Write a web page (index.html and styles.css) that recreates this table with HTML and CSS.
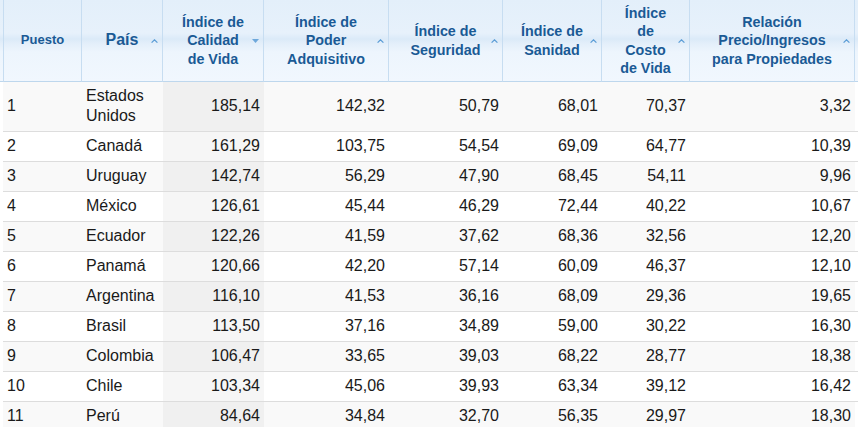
FILE: index.html
```html
<!DOCTYPE html>
<html lang="es">
<head>
<meta charset="utf-8">
<title>Ranking</title>
<link rel="stylesheet" href="styles.css">
</head>
<body>
<table class="rank">
  <colgroup>
    <col class="c-pad">
    <col class="c-rank">
    <col class="c-country">
    <col class="c-qol">
    <col class="c-power">
    <col class="c-safety">
    <col class="c-health">
    <col class="c-cost">
    <col class="c-price">
    <col class="c-pad">
  </colgroup>
  <thead>
    <tr>
      <th class="pad"></th>
      <th class="first">Puesto</th>
      <th class="big">País<span class="sort"><svg width="7" height="4" viewBox="0 0 7 4"><path d="M0.6 3.6 L3.5 0.8 L6.4 3.6" fill="none" stroke="#5b9dd6" stroke-width="1.2"/></svg></span></th>
      <th>Índice de<br>Calidad<br>de Vida<span class="sort"><svg width="7" height="4" viewBox="0 0 7 4"><path d="M0 0 H7 L3.5 4 Z" fill="#6ea8db"/></svg></span></th>
      <th>Índice de<br>Poder<br>Adquisitivo<span class="sort"><svg width="7" height="4" viewBox="0 0 7 4"><path d="M0.6 3.6 L3.5 0.8 L6.4 3.6" fill="none" stroke="#5b9dd6" stroke-width="1.2"/></svg></span></th>
      <th>Índice de<br>Seguridad<span class="sort"><svg width="7" height="4" viewBox="0 0 7 4"><path d="M0.6 3.6 L3.5 0.8 L6.4 3.6" fill="none" stroke="#5b9dd6" stroke-width="1.2"/></svg></span></th>
      <th>Índice de<br>Sanidad<span class="sort"><svg width="7" height="4" viewBox="0 0 7 4"><path d="M0.6 3.6 L3.5 0.8 L6.4 3.6" fill="none" stroke="#5b9dd6" stroke-width="1.2"/></svg></span></th>
      <th>Índice<br>de<br>Costo<br>de Vida<span class="sort"><svg width="7" height="4" viewBox="0 0 7 4"><path d="M0.6 3.6 L3.5 0.8 L6.4 3.6" fill="none" stroke="#5b9dd6" stroke-width="1.2"/></svg></span></th>
      <th>Relación<br>Precio/Ingresos<br>para Propiedades<span class="sort"><svg width="7" height="4" viewBox="0 0 7 4"><path d="M0.6 3.6 L3.5 0.8 L6.4 3.6" fill="none" stroke="#5b9dd6" stroke-width="1.2"/></svg></span></th>
      <th class="pad end"></th>
    </tr>
  </thead>
  <tbody>
    <tr><td class="pad"></td><td>1</td><td>Estados Unidos</td><td class="num sorted">185,14</td><td class="num">142,32</td><td class="num">50,79</td><td class="num">68,01</td><td class="num">70,37</td><td class="num">3,32</td><td class="pad end"></td></tr>
    <tr><td class="pad"></td><td>2</td><td>Canadá</td><td class="num sorted">161,29</td><td class="num">103,75</td><td class="num">54,54</td><td class="num">69,09</td><td class="num">64,77</td><td class="num">10,39</td><td class="pad end"></td></tr>
    <tr><td class="pad"></td><td>3</td><td>Uruguay</td><td class="num sorted">142,74</td><td class="num">56,29</td><td class="num">47,90</td><td class="num">68,45</td><td class="num">54,11</td><td class="num">9,96</td><td class="pad end"></td></tr>
    <tr><td class="pad"></td><td>4</td><td>México</td><td class="num sorted">126,61</td><td class="num">45,44</td><td class="num">46,29</td><td class="num">72,44</td><td class="num">40,22</td><td class="num">10,67</td><td class="pad end"></td></tr>
    <tr><td class="pad"></td><td>5</td><td>Ecuador</td><td class="num sorted">122,26</td><td class="num">41,59</td><td class="num">37,62</td><td class="num">68,36</td><td class="num">32,56</td><td class="num">12,20</td><td class="pad end"></td></tr>
    <tr><td class="pad"></td><td>6</td><td>Panamá</td><td class="num sorted">120,66</td><td class="num">42,20</td><td class="num">57,14</td><td class="num">60,09</td><td class="num">46,37</td><td class="num">12,10</td><td class="pad end"></td></tr>
    <tr><td class="pad"></td><td>7</td><td>Argentina</td><td class="num sorted">116,10</td><td class="num">41,53</td><td class="num">36,16</td><td class="num">68,09</td><td class="num">29,36</td><td class="num">19,65</td><td class="pad end"></td></tr>
    <tr><td class="pad"></td><td>8</td><td>Brasil</td><td class="num sorted">113,50</td><td class="num">37,16</td><td class="num">34,89</td><td class="num">59,00</td><td class="num">30,22</td><td class="num">16,30</td><td class="pad end"></td></tr>
    <tr><td class="pad"></td><td>9</td><td>Colombia</td><td class="num sorted">106,47</td><td class="num">33,65</td><td class="num">39,03</td><td class="num">68,22</td><td class="num">28,77</td><td class="num">18,38</td><td class="pad end"></td></tr>
    <tr><td class="pad"></td><td>10</td><td>Chile</td><td class="num sorted">103,34</td><td class="num">45,06</td><td class="num">39,93</td><td class="num">63,34</td><td class="num">39,12</td><td class="num">16,42</td><td class="pad end"></td></tr>
    <tr><td class="pad"></td><td>11</td><td>Perú</td><td class="num sorted">84,64</td><td class="num">34,84</td><td class="num">32,70</td><td class="num">56,35</td><td class="num">29,97</td><td class="num">18,30</td><td class="pad end"></td></tr>
  </tbody>
</table>
</body>
</html>
```
FILE: styles.css
```css
html, body {
  margin: 0;
  padding: 0;
  background: #ffffff;
}

body {
  font-family: "Liberation Sans", Arial, sans-serif;
  overflow: hidden;
}

.rank {
  border-collapse: separate;
  border-spacing: 0;
  table-layout: fixed;
  width: 858px;
}

.c-pad { width: 3px; }
.c-rank { width: 79px; }
.c-country { width: 81px; }
.c-qol { width: 101px; }
.c-power { width: 125px; }
.c-safety { width: 114px; }
.c-health { width: 99px; }
.c-cost { width: 88px; }
.c-price { width: 165px; }

.rank th {
  box-sizing: border-box;
  height: 82px;
  padding: 0;
  position: relative;
  background: linear-gradient(180deg, #e3effa 0px, #e7f1fb 33px, #dbeaf8 39px, #e4effa 44px, #edf5fd 52px, #f1f7fe 81px);
  border-right: 1px solid #c7ddf1;
  border-bottom: 1px solid #bed7ed;
  color: #1a5a95;
  font-size: 14.3px;
  font-weight: bold;
  line-height: 18.3px;
  text-align: center;
  vertical-align: middle;
}

.rank th.first {
  border-left: 1px solid #c7ddf1;
  font-size: 13px;
}

.rank th.pad {
  border-right: none;
}

.rank th.big {
  font-size: 16px;
}

.sort {
  position: absolute;
  right: 4px;
  top: 50%;
  margin-top: -2px;
  width: 7px;
  height: 4px;
  line-height: 0;
}

.sort svg {
  display: block;
}

.rank td {
  box-sizing: border-box;
  padding: 4px 4px 5px 4px;
  font-size: 16px;
  line-height: 20px;
  color: #1a1a1a;
  border-bottom: 1px solid #dddddd;
  text-align: left;
  vertical-align: middle;
  background: #ffffff;
}

.rank td.num {
  text-align: right;
}

.rank td.pad {
  padding: 0;
  border-bottom: none;
}

.rank td.pad.end {
  border-bottom: 1px solid #dddddd;
}

.rank tbody tr:nth-child(odd) td {
  background: #f9f9f9;
}

.rank tbody tr:nth-child(odd) td.pad {
  background: #ffffff;
}

.rank tbody tr td.sorted {
  background: #f6f6f6;
}

.rank tbody tr:nth-child(odd) td.sorted {
  background: #f0f0f0;
}
```
